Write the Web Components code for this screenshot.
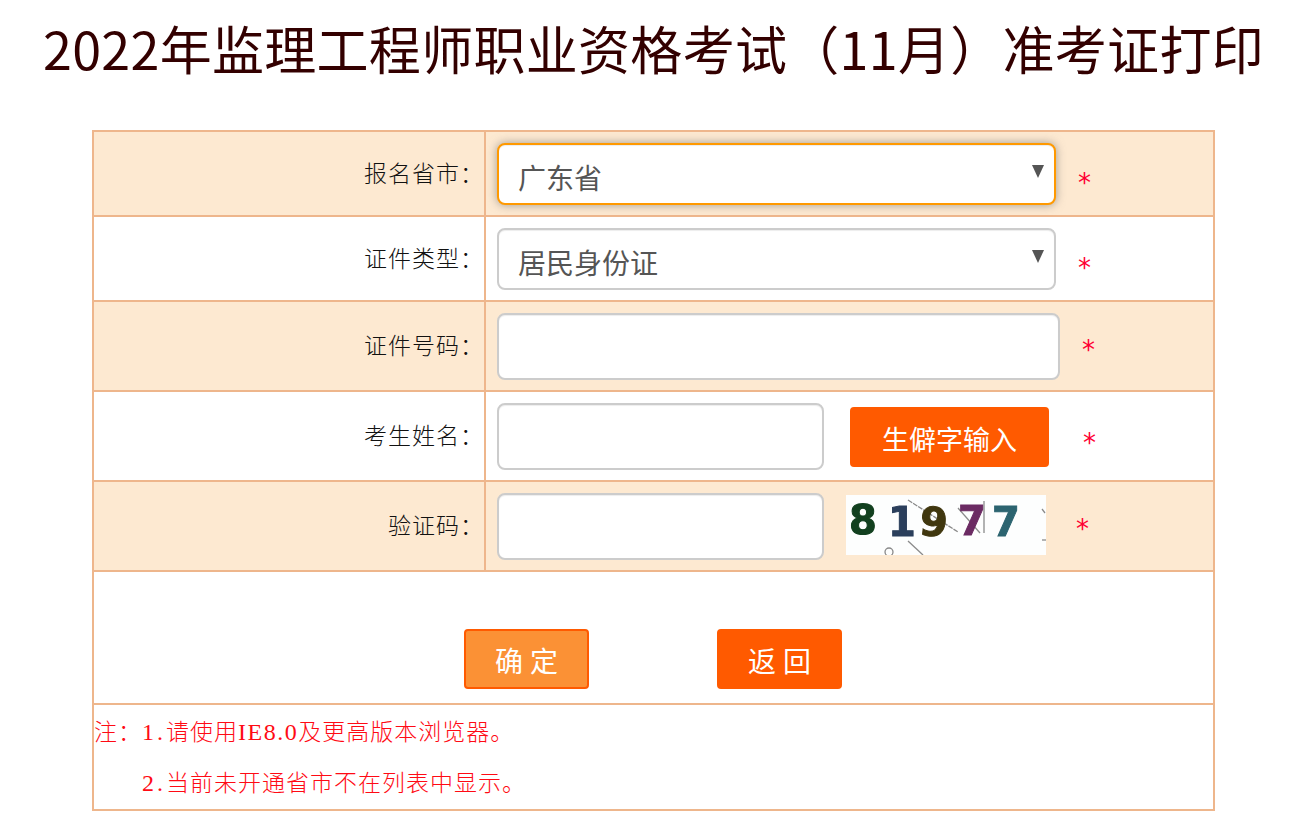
<!DOCTYPE html>
<html lang="zh-CN">
<head>
<meta charset="utf-8">
<title>准考证打印</title>
<style>
  html, body { margin: 0; padding: 0; background: #fff; }
  body { font-family: "Noto Sans CJK SC", sans-serif; }
  form-note .num { font-family: "Liberation Serif", serif; font-size: 24px; letter-spacing: 3px; }
  form-note .ver { font-family: "Liberation Serif", serif; font-size: 24px; letter-spacing: 1.5px; }
</style>
</head>
<body>
<exam-page>
  <span slot="title">2022年监理工程师职业资格考试（11月）准考证打印</span>

  <form-row tint height="83">
    <span slot="label">报名省市：</span>
    <select-box focused width="559" value="广东省"></select-box>
    <req-star gap="22" top="18"></req-star>
  </form-row>
  <form-row height="83">
    <span slot="label">证件类型：</span>
    <select-box width="559" value="居民身份证"></select-box>
    <req-star gap="22" top="18"></req-star>
  </form-row>
  <form-row tint height="88">
    <span slot="label">证件号码：</span>
    <text-box width="563"></text-box>
    <req-star gap="22" top="7"></req-star>
  </form-row>
  <form-row height="88">
    <span slot="label">考生姓名：</span>
    <text-box width="327"></text-box>
    <action-button kind="solid" width="199" gap="26">生僻字输入</action-button>
    <req-star gap="34" top="14"></req-star>
  </form-row>
  <form-row tint height="88">
    <span slot="label">验证码：</span>
    <text-box width="327"></text-box>
    <captcha-image></captcha-image>
    <req-star gap="30" top="6"></req-star>
  </form-row>

  <action-bar>
    <action-button kind="soft" width="125" track>确定</action-button>
    <action-button kind="solid" width="125" track>返回</action-button>
  </action-bar>

  <form-note>
    <div>注：<span class="num">1.</span>请使用<span class="ver">IE8.0</span>及更高版本浏览器。</div>
    <div>　　<span class="num">2.</span>当前未开通省市不在列表中显示。</div>
  </form-note>
</exam-page>

<script>
const BORDER = '#eeb68c';
const TINT = '#fde9d1';
const ORANGE = '#ff5a00';

class ExamPage extends HTMLElement {
  constructor() {
    super();
    this.attachShadow({ mode: 'open' });
    this.shadowRoot.innerHTML = `
      <style>
        :host { display: block; width: 1291px; }
        h1 {
          margin: 0;
          height: 130px;
          padding: 13px 0 0 16px;
          box-sizing: border-box;
          text-align: center;
          font: 400 52px/70px "Noto Sans CJK SC", sans-serif;
          letter-spacing: .3px;
          color: #330000;
          white-space: nowrap;
        }
        .table {
          width: 1123px;
          margin-left: 92px;
          box-sizing: border-box;
          border: 2px solid ${BORDER};
          display: flex;
          flex-direction: column;
        }
      </style>
      <h1><slot name="title"></slot></h1>
      <div class="table"><slot></slot></div>
    `;
  }
}

class FormRow extends HTMLElement {
  constructor() {
    super();
    this.attachShadow({ mode: 'open' });
    this.shadowRoot.innerHTML = `
      <style>
        :host {
          display: grid;
          grid-template-columns: 392px 1fr;
          box-sizing: content-box;
          border-bottom: 2px solid ${BORDER};
        }
        :host([tint]) { background: ${TINT}; }
        .label {
          border-right: 2px solid ${BORDER};
          display: flex;
          align-items: center;
          justify-content: flex-end;
          padding-bottom: 4px;
          font: 300 23px/30px "Noto Sans CJK SC", sans-serif;
          letter-spacing: 1px;
          color: #111;
        }
        .field {
          display: flex;
          align-items: center;
          padding-left: 11px;
        }
      </style>
      <div class="label"><slot name="label"></slot></div>
      <div class="field"><slot></slot></div>
    `;
  }
  connectedCallback() {
    this.style.height = this.getAttribute('height') + 'px';
  }
}

class SelectBox extends HTMLElement {
  constructor() {
    super();
    this.attachShadow({ mode: 'open' });
    this.shadowRoot.innerHTML = `
      <style>
        :host { display: block; position: relative; margin-top: 1px; }
        select {
          display: block;
          width: 100%;
          height: 62px;
          box-sizing: border-box;
          appearance: none;
          background: #fff;
          border: 2px solid #ccc;
          border-radius: 8px;
          padding: 5px 0 0 19px;
          font: 400 28px "Noto Sans CJK SC", sans-serif;
          color: #555;
          outline: none;
          box-shadow: inset 0 1px 1px rgba(0,0,0,.075);
        }
        :host([focused]) select {
          border-color: #ff9900;
          box-shadow: inset 0 1px 1px rgba(0,0,0,.075), 0 0 10px rgba(102,102,102,.6);
        }
        .arrow {
          position: absolute;
          right: 12px;
          top: 22px;
          width: 0;
          height: 0;
          border-left: 6px solid transparent;
          border-right: 6px solid transparent;
          border-top: 13px solid #555;
          pointer-events: none;
        }
      </style>
      <select></select>
      <span class="arrow"></span>
    `;
  }
  connectedCallback() {
    this.style.width = this.getAttribute('width') + 'px';
    const opt = document.createElement('option');
    opt.textContent = this.getAttribute('value');
    this.shadowRoot.querySelector('select').append(opt);
  }
}

class TextBox extends HTMLElement {
  constructor() {
    super();
    this.attachShadow({ mode: 'open' });
    this.shadowRoot.innerHTML = `
      <style>
        :host { display: block; margin-top: 1px; }
        input {
          display: block;
          width: 100%;
          height: 67px;
          box-sizing: border-box;
          background: #fff;
          border: 2px solid #ccc;
          border-radius: 8px;
          padding: 0 16px;
          outline: none;
          box-shadow: inset 0 1px 1px rgba(0,0,0,.075);
        }
      </style>
      <input type="text">
    `;
  }
  connectedCallback() {
    this.style.width = this.getAttribute('width') + 'px';
  }
}

class ReqStar extends HTMLElement {
  constructor() {
    super();
    this.attachShadow({ mode: 'open' });
    this.shadowRoot.innerHTML = `
      <style>
        :host {
          display: block;
          font: 400 26px/26px "DejaVu Sans", sans-serif;
          color: #ff0033;
        }
      </style>*`;
  }
  connectedCallback() {
    this.style.marginLeft = this.getAttribute('gap') + 'px';
    this.style.marginTop = this.getAttribute('top') + 'px';
  }
}

class ActionButton extends HTMLElement {
  constructor() {
    super();
    this.attachShadow({ mode: 'open' });
    this.shadowRoot.innerHTML = `
      <style>
        :host { display: block; }
        button {
          display: block;
          width: 100%;
          height: 60px;
          box-sizing: border-box;
          border: 2px solid ${ORANGE};
          border-radius: 4px;
          background: ${ORANGE};
          color: #fff;
          padding: 2px 0 0;
          font: 400 27px/1 "Noto Sans CJK SC", sans-serif;
        }
        :host([kind="soft"]) button { background: #fb9135; }
        :host([track]) button { letter-spacing: 7px; padding-left: 7px; font-size: 28px; }
        :host([gap]) { margin-top: 2px; }
      </style>
      <button type="button"><slot></slot></button>
    `;
  }
  connectedCallback() {
    this.style.width = this.getAttribute('width') + 'px';
    if (this.hasAttribute('gap')) this.style.marginLeft = this.getAttribute('gap') + 'px';
  }
}

class ActionBar extends HTMLElement {
  constructor() {
    super();
    this.attachShadow({ mode: 'open' });
    this.shadowRoot.innerHTML = `
      <style>
        :host {
          display: flex;
          height: 131px;
          box-sizing: content-box;
          padding-left: 370px;
          gap: 128px;
          align-items: flex-end;
          border-bottom: 2px solid ${BORDER};
        }
        ::slotted(*) { margin-bottom: 14px; }
      </style>
      <slot></slot>
    `;
  }
}

class CaptchaImage extends HTMLElement {
  constructor() {
    super();
    this.attachShadow({ mode: 'open' });
    this.shadowRoot.innerHTML = `
      <style>
        :host { display: block; width: 200px; height: 60px; margin: 0 0 2px 22px; }
        svg { display: block; background: #fdfefe; }
        text { font: 700 40px "DejaVu Sans", sans-serif; stroke-width: 1; }
        .digits { filter: blur(.4px); }
      </style>
      <svg width="200" height="60" viewBox="0 0 200 60">
        <g fill="none" stroke="#8a8a8a" stroke-width="1.3">
          <path d="M62 5 L112 37" stroke-dasharray="5 1"/>
          <path d="M62 46 L77 60"/>
          <path d="M138 6 L138 38"/>
          <path d="M112 13 L134 38"/>
          <path d="M196 14 L199 18"/>
          <path d="M196 45 L200 45"/>
          <circle cx="43" cy="57" r="4"/>
        </g>
        <g class="digits">
          <text x="3" y="39" fill="#12401f" stroke="#12401f">8</text>
          <text x="42" y="41" fill="#2b3f5c" stroke="#2b3f5c">1</text>
          <text x="74" y="41" fill="#40370f" stroke="#40370f" transform="rotate(6 88 25)">9</text>
          <text x="112" y="40" fill="#6b2b63" stroke="#6b2b63">7</text>
          <text x="146" y="41" fill="#2c6470" stroke="#2c6470">7</text>
        </g>
      </svg>
    `;
  }
}

class FormNote extends HTMLElement {
  constructor() {
    super();
    this.attachShadow({ mode: 'open' });
    this.shadowRoot.innerHTML = `
      <style>
        :host {
          display: block;
          height: 104px;
          box-sizing: border-box;
          font: 300 23px/51px "Noto Sans CJK SC", sans-serif;
          letter-spacing: 1px;
          color: #ff0a14;
          white-space: nowrap;
        }
        ::slotted(div) { height: 51px; }
      </style>
      <slot></slot>
    `;
  }
}

customElements.define('exam-page', ExamPage);
customElements.define('form-row', FormRow);
customElements.define('select-box', SelectBox);
customElements.define('text-box', TextBox);
customElements.define('req-star', ReqStar);
customElements.define('action-button', ActionButton);
customElements.define('action-bar', ActionBar);
customElements.define('captcha-image', CaptchaImage);
customElements.define('form-note', FormNote);
</script>
</body>
</html>
